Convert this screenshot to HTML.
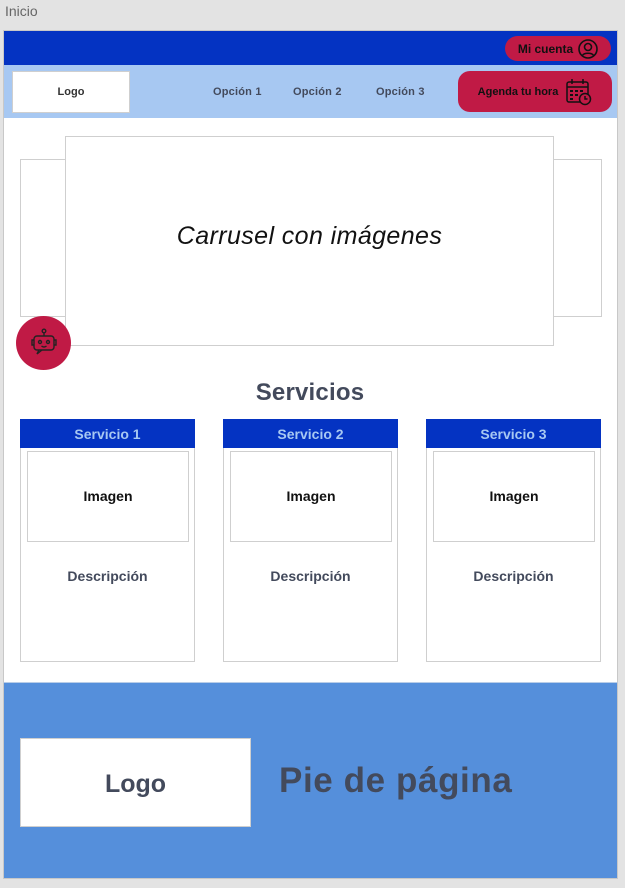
<!DOCTYPE html>
<html><head><meta charset="utf-8"><style>
*{box-sizing:border-box;margin:0;padding:0}
body{width:625px;height:888px;background:#e3e3e3;position:relative;font-family:"Liberation Sans",sans-serif;overflow:hidden}
.a{position:absolute}
.c{display:flex;align-items:center;justify-content:center}
.box{background:#fff;border:1px solid #cfcfcf}
.t{color:#434a5c;font-weight:bold}
</style></head><body>
<div class="a" style="left:5px;top:3px;font-size:14px;color:#666">Inicio</div>
<div class="a" style="left:3px;top:30px;width:615px;height:849px;background:#fff;border:1px solid #c8c8c8"></div>
<div class="a" style="left:4px;top:31px;width:613px;height:34px;background:#0433c2"></div>
<div class="a c" style="left:505px;top:36px;width:106px;height:25px;border-radius:13px;background:#c01a45;font-size:12px;font-weight:bold;color:#111;gap:5px">Mi cuenta
<svg width="20" height="20" viewBox="0 0 20 20" fill="none" stroke="#111" stroke-width="1.6"><circle cx="10" cy="10" r="9"/><circle cx="10" cy="8" r="3.5"/><path d="M4.5 16.5c1.5-3 9.5-3 11 0"/></svg></div>
<div class="a" style="left:4px;top:65px;width:613px;height:53px;background:#a7c8f2"></div>
<div class="a box c" style="left:12px;top:71px;width:118px;height:42px;font-size:11px;font-weight:bold;color:#333">Logo</div>
<div class="a t" style="left:213px;top:86px;font-size:11px;letter-spacing:0.2px">Opción 1</div>
<div class="a t" style="left:293px;top:86px;font-size:11px;letter-spacing:0.2px">Opción 2</div>
<div class="a t" style="left:376px;top:86px;font-size:11px;letter-spacing:0.2px">Opción 3</div>
<div class="a c" style="left:458px;top:71px;width:154px;height:41px;border-radius:12px;background:#c01a45;font-size:11px;font-weight:bold;color:#111;gap:8px">Agenda tu hora
<svg width="26" height="28" viewBox="0 0 26 28" fill="none" stroke="#111" stroke-width="1.5"><rect x="1" y="4" width="21" height="20" rx="2"/><path d="M1 9h21M6 1v5M17 1v5"/><g fill="#111" stroke="none"><rect x="4" y="12" width="3" height="2"/><rect x="9" y="12" width="3" height="2"/><rect x="14" y="12" width="3" height="2"/><rect x="4" y="16" width="3" height="2"/><rect x="9" y="16" width="3" height="2"/><rect x="4" y="20" width="3" height="2"/></g><circle cx="19" cy="21" r="5.5" fill="#c01a45"/><path d="M19 18v3h2.5"/></svg></div>
<div class="a box" style="left:20px;top:159px;width:582px;height:158px"></div>
<div class="a box c" style="left:65px;top:136px;width:489px;height:210px;font-size:25px;font-style:italic;color:#111;padding-bottom:10px;letter-spacing:0.4px">Carrusel con imágenes</div>
<div class="a c" style="left:16px;top:316px;width:55px;height:54px;border-radius:50%;background:#c01a45">
<svg width="32" height="32" viewBox="0 0 32 32" fill="none" stroke="#222" stroke-width="1.4"><circle cx="16" cy="4" r="1.8"/><path d="M16 6v3"/><rect x="6" y="9" width="20" height="14" rx="3"/><path d="M11 23l-2 4 5-4"/><circle cx="12" cy="15" r="1.5"/><circle cx="20" cy="15" r="1.5"/><path d="M13.5 19q2.5 2 5 0M6 13H4v5h2M26 13h2v5h-2"/></svg></div>
<div class="a t" style="left:0;width:620px;text-align:center;top:379px;font-size:24px;letter-spacing:0.2px">Servicios</div>
<div class="a box" style="left:20px;top:419px;width:175px;height:243px"></div>
<div class="a box" style="left:223px;top:419px;width:175px;height:243px"></div>
<div class="a box" style="left:426px;top:419px;width:175px;height:243px"></div>
<div class="a c" style="left:20px;top:419px;width:175px;height:29px;background:#0433c2;color:#a7c8f2;font-weight:bold;font-size:14px">Servicio 1</div>
<div class="a c" style="left:223px;top:419px;width:175px;height:29px;background:#0433c2;color:#a7c8f2;font-weight:bold;font-size:14px">Servicio 2</div>
<div class="a c" style="left:426px;top:419px;width:175px;height:29px;background:#0433c2;color:#a7c8f2;font-weight:bold;font-size:14px">Servicio 3</div>
<div class="a box c" style="left:27px;top:451px;width:162px;height:91px;font-size:14px;font-weight:bold;color:#111;padding-bottom:2px">Imagen</div>
<div class="a box c" style="left:230px;top:451px;width:162px;height:91px;font-size:14px;font-weight:bold;color:#111;padding-bottom:2px">Imagen</div>
<div class="a box c" style="left:433px;top:451px;width:162px;height:91px;font-size:14px;font-weight:bold;color:#111;padding-bottom:2px">Imagen</div>
<div class="a t" style="left:20px;width:175px;text-align:center;top:568px;font-size:14px">Descripción</div>
<div class="a t" style="left:223px;width:175px;text-align:center;top:568px;font-size:14px">Descripción</div>
<div class="a t" style="left:426px;width:175px;text-align:center;top:568px;font-size:14px">Descripción</div>
<div class="a" style="left:3px;top:682px;width:615px;height:197px;background:#558fdb;border:1px solid #c8c8c8;border-top-color:#b8cde8"></div>
<div class="a box c t" style="left:20px;top:738px;width:231px;height:89px;font-size:25px;padding-top:3px">Logo</div>
<div class="a t" style="left:279px;top:761px;font-size:35px;letter-spacing:0.6px">Pie de página</div>
</body></html>
